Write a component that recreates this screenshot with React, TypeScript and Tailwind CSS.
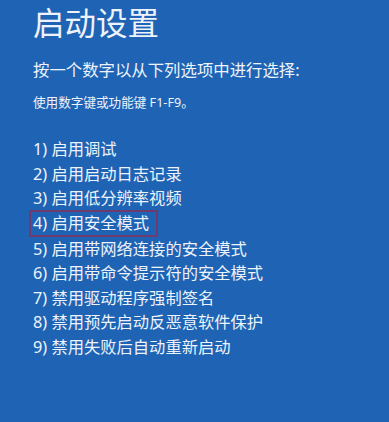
const items = [
  '1) 启用调试',
  '2) 启用启动日志记录',
  '3) 启用低分辨率视频',
  '4) 启用安全模式',
  '5) 启用带网络连接的安全模式',
  '6) 启用带命令提示符的安全模式',
  '7) 禁用驱动程序强制签名',
  '8) 禁用预先启动反恶意软件保护',
  '9) 禁用失败后自动重新启动',
];

export default function App() {
  return (
    <div
      className="h-[422px] w-[389px] overflow-hidden bg-[#1f64b4] pl-[33px] pt-[3px] text-[#eef3fb]"
      style={{ fontFamily: '"Segoe UI", "Noto Sans", "Noto Sans CJK SC", sans-serif' }}
    >
      <h1 className="text-[31.5px] leading-[40px] font-normal">启动设置</h1>
      <p className="mt-[15px] text-[16.4px] leading-[24px]">按一个数字以从下列选项中进行选择:</p>
      <p className="mt-[13px] text-[12.6px] leading-[16px]">使用数字键或功能键 F1-F9。</p>
      <ul className="mt-[26px]">
        {items.map((item, i) => (
          <li key={i} className="text-[16.3px] leading-[24.5px]">
            {i === 3 ? (
              <span className="-ml-[4px] -mt-[1px] inline-block w-[129px] border-2 border-[#6f3a6e] pl-[2px] leading-[23px]">
                {item}
              </span>
            ) : (
              item
            )}
          </li>
        ))}
      </ul>
    </div>
  );
}
